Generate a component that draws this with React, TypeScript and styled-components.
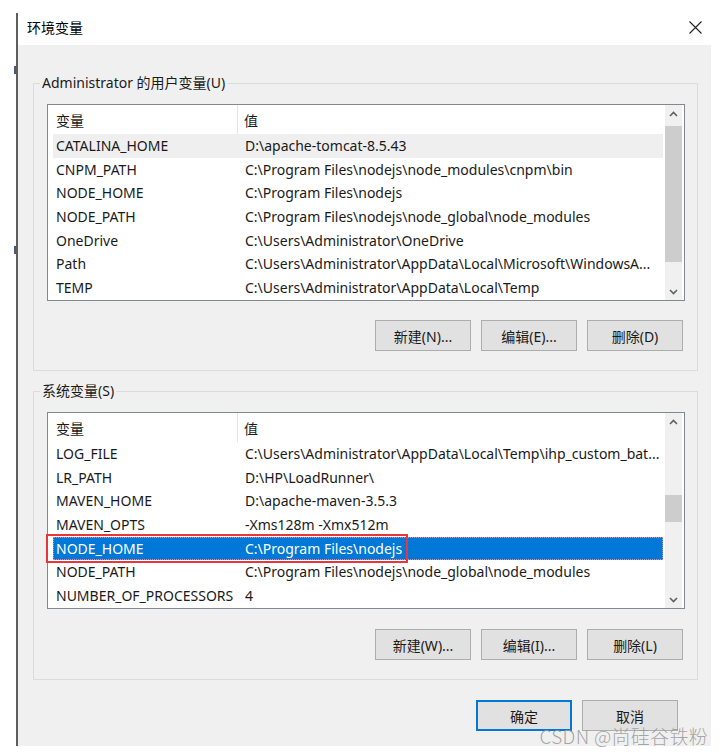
import React from 'react';
import styled, { createGlobalStyle } from 'styled-components';

const Global = createGlobalStyle`
  html, body { margin: 0; padding: 0; background: #fff; }
  body {
    font-family: "Noto Sans", "Noto Sans CJK SC", sans-serif;
    font-size: 14px;
    color: #000;
  }
  * { box-sizing: border-box; }
`;

const Page = styled.div`
  position: relative;
  display: flex;
  width: 724px;
  height: 755px;
  overflow: hidden;
  background: #fff;
`;

const LeftStrip = styled.div`
  flex: none;
  width: 16px;
  display: flex;
  flex-direction: column;
  align-items: flex-end;
  padding-top: 66px;
  gap: 172px;
`;

const StrayMark = styled.div`
  width: 2px;
  height: 8px;
  background: #4a5a7a;
`;

const Window = styled.div`
  flex: none;
  margin-top: 13px;
  width: 695px;
  height: 733px;
  border-left: 2px solid #5e5e5e;
  display: flex;
  flex-direction: column;
`;

const TitleBar = styled.div`
  flex: none;
  height: 32px;
  background: #fff;
  display: flex;
  align-items: center;
  justify-content: space-between;
  padding: 0 9px 4px 9px;
`;

const Title = styled.span`
  font-size: 14px;
  line-height: 20px;
  font-family: "Noto Sans CJK SC", sans-serif;
`;

const CloseIcon = () => (
  <svg width="13" height="13" viewBox="0 0 13 13">
    <path d="M0.5 0.5 L12.5 12.5 M12.5 0.5 L0.5 12.5" stroke="#222" strokeWidth="1.1" fill="none" />
  </svg>
);

const Body = styled.div`
  flex: 1;
  background: #f0f0f0;
  padding: 28px 13px 0 15px;
  display: flex;
  flex-direction: column;
`;

const Group = styled.fieldset<{ $gap?: number }>`
  margin: ${(p) => p.$gap ?? 0}px 0 0 0;
  padding: 11px 12px 19px 13px;
  border: 1px solid #dcdcdc;
  min-inline-size: 0;
  display: flex;
  flex-direction: column;
`;

const Legend = styled.legend`
  margin-left: -7px;
  padding: 0 2px;
  font-size: 14px;
  line-height: 20px;
  color: #1a1a1a;
`;

const ListBox = styled.div`
  height: 197px;
  border: 1px solid #828790;
  background: #fff;
  display: flex;
`;

const ListMain = styled.div`
  flex: 1;
  display: flex;
  flex-direction: column;
  min-width: 0;
`;

const HeaderRow = styled.div`
  flex: none;
  height: 29px;
  display: grid;
  grid-template-columns: 190px 1fr;
`;

const HeaderCell = styled.div<{ $first?: boolean }>`
  display: flex;
  align-items: center;
  padding-left: ${(p) => (p.$first ? 8 : 6)}px;
  border-right: ${(p) => (p.$first ? '1px solid #e5e5e5' : 'none')};
  font-family: "Noto Sans CJK SC", sans-serif;
  color: #1a1a1a;
`;

const Row = styled.div<{ $state?: 'hover' | 'selected' }>`
  position: relative;
  flex: none;
  height: 23.7px;
  margin: 0 2px 0 5px;
  display: grid;
  grid-template-columns: 185px 1fr;
  align-items: center;
  white-space: nowrap;
  background: ${(p) =>
    p.$state === 'selected' ? '#0078d7' : p.$state === 'hover' ? '#efefef' : 'transparent'};
  color: ${(p) => (p.$state === 'selected' ? '#fff' : '#1a1a1a')};
  outline: ${(p) => (p.$state === 'selected' ? '1px dotted rgba(255,170,190,0.7)' : 'none')};
  outline-offset: -1px;
`;

const Cell = styled.span<{ $value?: boolean }>`
  padding-left: ${(p) => (p.$value ? 7 : 3)}px;
  overflow: hidden;
  line-height: 20px;
`;

const Annotation = styled.div`
  position: absolute;
  left: -7px;
  top: -3px;
  width: 362px;
  height: 29px;
  border: 2px solid #e8373a;
  pointer-events: none;
`;

const ScrollTrack = styled.div`
  flex: none;
  width: 17px;
  margin-right: 2px;
  background: #f0f0f0;
  display: flex;
  flex-direction: column;
`;

const ArrowBox = styled.div`
  flex: none;
  height: 17px;
  display: flex;
  align-items: center;
  justify-content: center;
`;

const TrackSpace = styled.div`
  flex: 1;
  position: relative;
`;

const Thumb = styled.div<{ $top: number; $height: number }>`
  margin-top: ${(p) => p.$top}px;
  height: ${(p) => p.$height}px;
  background: #cdcdcd;
`;

const Chevron = ({ up }: { up?: boolean }) => (
  <svg width="9" height="6" viewBox="0 0 9 6">
    <path
      d={up ? 'M1 5 L4.5 1.5 L8 5' : 'M1 1 L4.5 4.5 L8 1'}
      stroke="#606060"
      strokeWidth="1.6"
      fill="none"
    />
  </svg>
);

const ButtonRow = styled.div<{ $gapTop: number; $padRight: number }>`
  display: flex;
  justify-content: flex-end;
  gap: 10px;
  margin-top: ${(p) => p.$gapTop}px;
  padding-right: ${(p) => p.$padRight}px;
`;

const Button = styled.button<{ $default?: boolean }>`
  width: 96px;
  height: 31px;
  margin: 0;
  padding: 0;
  background: #e1e1e1;
  border: ${(p) => (p.$default ? '2px solid #0078d7' : '1px solid #adadad')};
  font-family: "Noto Sans", "Noto Sans CJK SC", sans-serif;
  font-size: 14px;
  color: #1a1a1a;
  display: flex;
  align-items: center;
  justify-content: center;
`;

const Watermark = styled.div`
  position: absolute;
  right: 16px;
  top: 725px;
  font-family: "Noto Sans CJK SC", sans-serif;
  font-size: 19px;
  font-weight: 300;
  line-height: 22px;
  color: rgba(150, 150, 150, 0.85);
  letter-spacing: 0.3px;
  pointer-events: none;
`;

type Item = { name: string; value: string; state?: 'hover' | 'selected'; mark?: boolean };

const userVars: Item[] = [
  { name: 'CATALINA_HOME', value: 'D:\\apache-tomcat-8.5.43', state: 'hover' },
  { name: 'CNPM_PATH', value: 'C:\\Program Files\\nodejs\\node_modules\\cnpm\\bin' },
  { name: 'NODE_HOME', value: 'C:\\Program Files\\nodejs' },
  { name: 'NODE_PATH', value: 'C:\\Program Files\\nodejs\\node_global\\node_modules' },
  { name: 'OneDrive', value: 'C:\\Users\\Administrator\\OneDrive' },
  { name: 'Path', value: 'C:\\Users\\Administrator\\AppData\\Local\\Microsoft\\WindowsA...' },
  { name: 'TEMP', value: 'C:\\Users\\Administrator\\AppData\\Local\\Temp' },
];

const sysVars: Item[] = [
  { name: 'LOG_FILE', value: 'C:\\Users\\Administrator\\AppData\\Local\\Temp\\ihp_custom_bat...' },
  { name: 'LR_PATH', value: 'D:\\HP\\LoadRunner\\' },
  { name: 'MAVEN_HOME', value: 'D:\\apache-maven-3.5.3' },
  { name: 'MAVEN_OPTS', value: '-Xms128m -Xmx512m' },
  { name: 'NODE_HOME', value: 'C:\\Program Files\\nodejs', state: 'selected', mark: true },
  { name: 'NODE_PATH', value: 'C:\\Program Files\\nodejs\\node_global\\node_modules' },
  { name: 'NUMBER_OF_PROCESSORS', value: '4' },
];

const VarList = ({ items, thumbTop, thumbHeight }: { items: Item[]; thumbTop: number; thumbHeight: number }) => (
  <ListBox>
    <ListMain>
      <HeaderRow>
        <HeaderCell $first>变量</HeaderCell>
        <HeaderCell>值</HeaderCell>
      </HeaderRow>
      {items.map((it) => (
        <Row key={it.name} $state={it.state}>
          <Cell>{it.name}</Cell>
          <Cell $value>{it.value}</Cell>
          {it.mark && <Annotation />}
        </Row>
      ))}
    </ListMain>
    <ScrollTrack>
      <ArrowBox>
        <Chevron up />
      </ArrowBox>
      <TrackSpace>
        <Thumb $top={thumbTop} $height={thumbHeight} />
      </TrackSpace>
      <ArrowBox>
        <Chevron />
      </ArrowBox>
    </ScrollTrack>
  </ListBox>
);

export default function App() {
  return (
    <Page>
      <Global />
      <LeftStrip>
        <StrayMark />
        <StrayMark />
      </LeftStrip>
      <Window>
        <TitleBar>
          <Title>环境变量</Title>
          <CloseIcon />
        </TitleBar>
        <Body>
          <Group>
            <Legend>Administrator 的用户变量(U)</Legend>
            <VarList items={userVars} thumbTop={4} thumbHeight={136} />
            <ButtonRow $gapTop={19} $padRight={2}>
              <Button>新建(N)...</Button>
              <Button>编辑(E)...</Button>
              <Button>删除(D)</Button>
            </ButtonRow>
          </Group>
          <Group $gap={10}>
            <Legend>系统变量(S)</Legend>
            <VarList items={sysVars} thumbTop={65} thumbHeight={27} />
            <ButtonRow $gapTop={20} $padRight={2}>
              <Button>新建(W)...</Button>
              <Button>编辑(I)...</Button>
              <Button>删除(L)</Button>
            </ButtonRow>
          </Group>
          <ButtonRow $gapTop={20} $padRight={20}>
            <Button $default>确定</Button>
            <Button>取消</Button>
          </ButtonRow>
        </Body>
      </Window>
      <Watermark>CSDN @尚硅谷铁粉</Watermark>
    </Page>
  );
}
